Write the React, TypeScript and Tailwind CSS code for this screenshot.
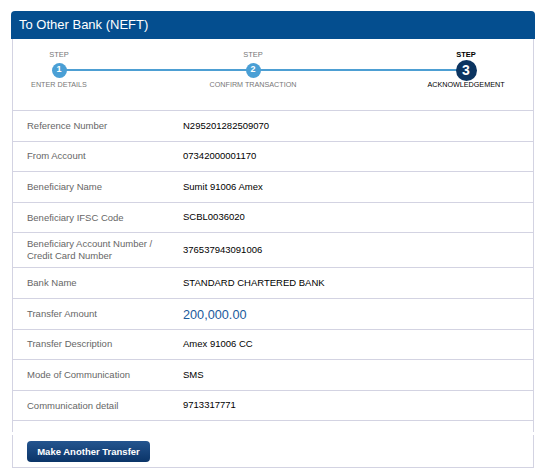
export default function App() {
    const rows = [
        {label: "Reference Number", value: "N295201282509070"},
        {label: "From Account", value: "07342000001170"},
        {label: "Beneficiary Name", value: "Sumit 91006 Amex"},
        {label: "Beneficiary IFSC Code", value: "SCBL0036020"},
        {label: "Beneficiary Account Number / Credit Card Number", value: "376537943091006", tall: true},
        {label: "Bank Name", value: "STANDARD CHARTERED BANK"},
        {label: "Transfer Amount", value: "200,000.00", amount: true},
        {label: "Transfer Description", value: "Amex 91006 CC"},
        {label: "Mode of Communication", value: "SMS"},
        {label: "Communication detail", value: "9713317771"},
    ]

    return (
        <div className="min-h-screen bg-white pl-[11px] pt-[11px] font-['Liberation_Sans',Arial,sans-serif]">
            <div className="w-[524px]">
                {/* header */}
                <div className="h-[28px] rounded-t-[4px] bg-[#044e8f] pl-[8px] flex items-center text-[13px] text-white">
                    To Other Bank (NEFT)
                </div>

                <div className="ml-[1px] w-[522px] border-x border-[#d3d3e2] bg-white">
                    {/* stepper */}
                    <div className="relative h-[71px] pt-[11px] flex">
                        <div className="absolute left-[46px] top-[30px] h-[2px] w-[407px] bg-[#4d9fd3]"></div>
                        <Step n="1" label="ENTER DETAILS" className="w-[92px]"/>
                        <Step n="2" label="CONFIRM TRANSACTION" className="ml-[88px] w-[120px]"/>
                        <Step n="3" label="ACKNOWLEDGEMENT" active className="ml-[93px] w-[120px]"/>
                    </div>

                    {/* details */}
                    <div className="pb-[11px]">
                        {rows.map((r) => (
                            <div
                                key={r.label}
                                className={`flex items-center border-t border-[#d3d3e2] ${r.tall ? "h-[35px]" : "h-[30.6px]"}`}>
                                <div className="w-[170px] pl-[14px] pr-[14px] text-[9.5px] leading-[12px] text-[#666666]">
                                    {r.label}
                                </div>
                                {r.amount ? (
                                    <div className="text-[12.7px] text-[#1b5a9c] pt-[3px]">{r.value}</div>
                                ) : (
                                    <div className="text-[9.5px] text-black">{r.value}</div>
                                )}
                            </div>
                        ))}
                        <div className="border-t border-[#d3d3e2]"></div>
                    </div>
                </div>

                {/* actions */}
                <div className="ml-[1px] mt-[3px] w-[522px] border-x border-b border-[#d3d3e2] pl-[14px] pt-[6px] pb-[5px]">
                    <button className="block h-[21px] w-[123px] rounded-[4px] bg-gradient-to-b from-[#24558f] to-[#0a3468] text-[9.5px] font-bold text-white">
                        Make Another Transfer
                    </button>
                </div>
            </div>
        </div>
    );
}

function Step({n, label, active, className}: {n: string, label: string, active?: boolean, className?: string}) {
    return (
        <div className={`relative flex flex-col items-center ${className ?? ""}`}>
            <div className={`h-[10px] text-[7.5px] leading-[10px] ${active ? "font-bold text-black" : "text-[#777777]"}`}>
                STEP
            </div>
            <div className="h-[20px] flex items-center justify-center">
                {active ? (
                    <div className="h-[21px] w-[21px] rounded-full bg-[#0c3561] flex items-center justify-center text-[14px] font-bold text-white">
                        {n}
                    </div>
                ) : (
                    <div className="h-[15px] w-[15px] rounded-full bg-[#4a9fd5] flex items-center justify-center text-[9px] font-bold text-white">
                        {n}
                    </div>
                )}
            </div>
            <div className={`h-[10px] whitespace-nowrap text-[7.2px] leading-[10px] ${active ? "text-black" : "text-[#777777]"}`}>
                {label}
            </div>
        </div>
    );
}
